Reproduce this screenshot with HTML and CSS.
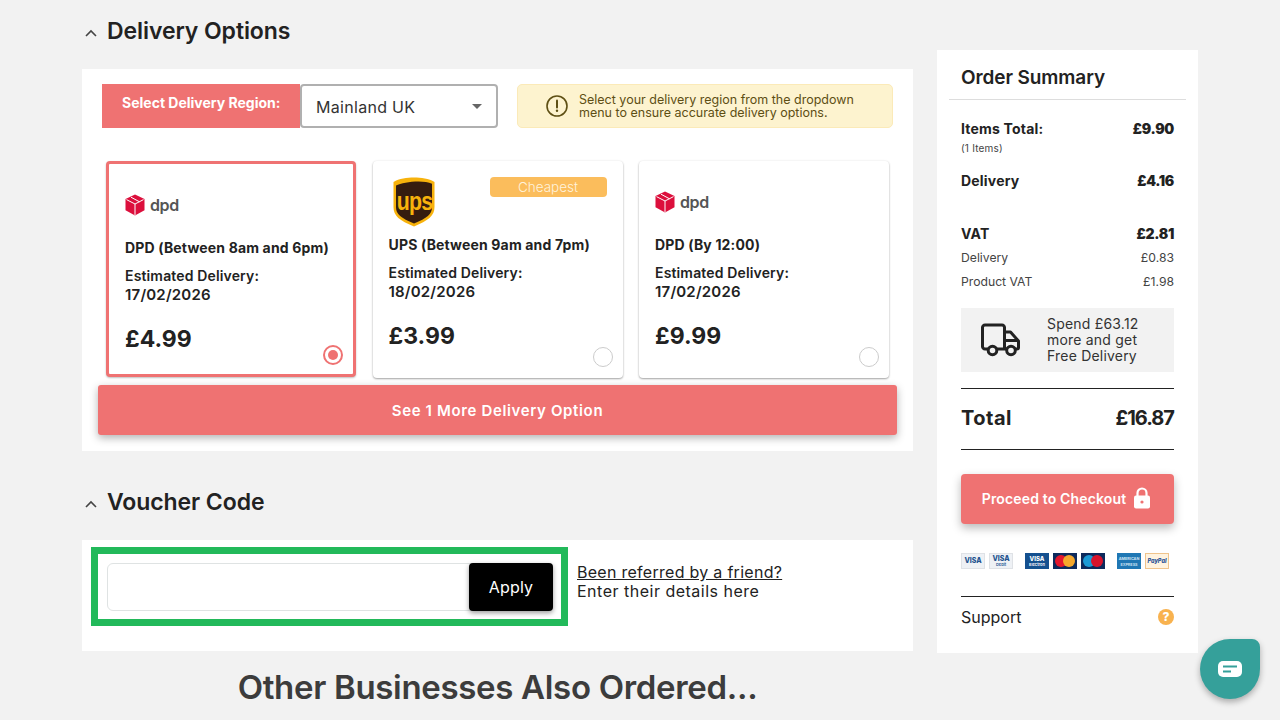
FILE: index.html
```html
<!DOCTYPE html>
<html lang="en">
<head>
<meta charset="utf-8">
<title>Checkout</title>
<link rel="stylesheet" href="styles.css">
</head>
<body>
<div class="page">
  <main class="main">
    <div class="sec-head first">
      <svg class="chev" width="12" height="8" viewBox="0 0 12 8"><path d="M1 7l5-5 5 5" fill="none" stroke="#444" stroke-width="1.6"/></svg>
      <h2>Delivery Options</h2>
    </div>
    <section class="panel delivery">
      <div class="region-row">
        <div class="region-label">Select Delivery Region:</div>
        <div class="region-select"><span>Mainland UK</span><i class="caret"></i></div>
        <div class="notice">
          <svg width="24" height="24" viewBox="0 0 24 24"><circle cx="12" cy="12" r="10" fill="none" stroke="#5e4f14" stroke-width="1.6"/><path d="M12 6.500v7" stroke="#5e4f14" stroke-width="2" stroke-linecap="round"/><circle cx="12" cy="16.800" r="1.200" fill="#5e4f14"/></svg>
          <p>Select your delivery region from the dropdown menu to ensure accurate delivery options.</p>
        </div>
      </div>
      <div class="cards">
        <article class="card selected">
          <div class="logo dpd-logo">
            <svg width="20" height="22" viewBox="0 0 20 22"><path d="M10 .5l9.500 4.600v11.200L10 21.500.5 16.300V5.100z" fill="#dc0f3c"/><path d="M1.500 5.600L10 10l8.500-4.400M10 10v11M6 3.200l8.500 4.600" fill="none" stroke="#fff" stroke-width="1"/></svg>
            <span>dpd</span>
          </div>
          <h3>DPD (Between 8am and 6pm)</h3>
          <p class="est">Estimated Delivery:</p>
          <p class="date">17/02/2026</p>
          <p class="price">£4.99</p>
          <span class="radio on"></span>
        </article>
        <article class="card ups">
          <span class="badge">Cheapest</span>
          <div class="logo ups-logo">
            <svg width="42" height="50" viewBox="0 0 42 50"><path d="M21 .5C14 .5 6 1.500.5 5v25c0 9 6 13.500 20.500 19.500C35 43.500 41.500 39 41.500 30V5C36 1.500 28 .5 21 .5z" fill="#f7b20c"/><path d="M3 8.500C10 5 30 2.500 39 6.800V30c0 7.500-5 11-18 16.500C8 41 3 37.500 3 30z" fill="#351c0f"/></svg>
            <span class="ups-word">ups</span>
          </div>
          <h3>UPS (Between 9am and 7pm)</h3>
          <p class="est">Estimated Delivery:</p>
          <p class="date">18/02/2026</p>
          <p class="price">£3.99</p>
          <span class="radio"></span>
        </article>
        <article class="card plain">
          <div class="logo dpd-logo">
            <svg width="20" height="22" viewBox="0 0 20 22"><path d="M10 .5l9.500 4.600v11.200L10 21.500.5 16.300V5.100z" fill="#dc0f3c"/><path d="M1.500 5.600L10 10l8.500-4.400M10 10v11M6 3.200l8.500 4.600" fill="none" stroke="#fff" stroke-width="1"/></svg>
            <span>dpd</span>
          </div>
          <h3>DPD (By 12:00)</h3>
          <p class="est">Estimated Delivery:</p>
          <p class="date">17/02/2026</p>
          <p class="price">£9.99</p>
          <span class="radio"></span>
        </article>
      </div>
      <button class="more">See 1 More Delivery Option</button>
    </section>

    <div class="sec-head second">
      <svg class="chev" width="12" height="8" viewBox="0 0 12 8"><path d="M1 7l5-5 5 5" fill="none" stroke="#444" stroke-width="1.6"/></svg>
      <h2>Voucher Code</h2>
    </div>
    <section class="panel voucher">
      <div class="voucher-box">
        <div class="voucher-field"><button class="apply">Apply</button></div>
      </div>
      <div class="referral">
        <a href="#">Been referred by a friend?</a>
        <span>Enter their details here</span>
      </div>
    </section>
    <h2 class="other">Other Businesses Also Ordered...</h2>
  </main>

  <aside class="summary">
    <h2 class="sum-title">Order Summary</h2>
    <div class="sum-body">
      <div class="row strong"><span>Items Total:</span><b>£9.90</b></div>
      <div class="items">(1 Items)</div>
      <div class="row strong delivery-row"><span>Delivery</span><b>£4.16</b></div>
      <div class="row strong vat-row"><span>VAT</span><b>£2.81</b></div>
      <div class="row minor first-minor"><span>Delivery</span><span>£0.83</span></div>
      <div class="row minor second-minor"><span>Product VAT</span><span>£1.98</span></div>
      <div class="free">
        <svg width="40" height="34" viewBox="0 0 40 34"><path d="M7 26H4a2.500 2.500 0 0 1-2.500-2.500V4.500A2.500 2.500 0 0 1 4 2h17a2.500 2.500 0 0 1 2.500 2.500V26H16M23.500 9h6l8 9v6.500a1.500 1.500 0 0 1-1.500 1.500h-2M26 26h-2.500M24 17.500h13" fill="none" stroke="#222" stroke-width="3" stroke-linejoin="round"/><circle cx="11.500" cy="27.500" r="4.300" fill="none" stroke="#222" stroke-width="3"/><circle cx="30" cy="27.500" r="4.300" fill="none" stroke="#222" stroke-width="3"/></svg>
        <p>Spend £63.12 more and get Free Delivery</p>
      </div>
      <div class="total"><span class="total-label">Total</span><span class="total-value">£16.87</span></div>
      <button class="checkout">Proceed to Checkout
        <svg width="18" height="22" viewBox="0 0 18 22"><path d="M4.500 9V6a4.500 4.500 0 0 1 9 0v3" fill="none" stroke="#fff" stroke-width="2.200"/><rect x="1" y="8.500" width="16" height="13" rx="2" fill="#fff"/><circle cx="9" cy="15" r="1.600" fill="#ef7272"/></svg>
      </button>
      <div class="pay">
        <span class="pc light">VISA</span>
        <span class="pc light debit">VISA<small>Debit</small></span>
        <span class="pc navy gap">VISA<small>Electron</small></span>
        <span class="pc mc"><i class="c1"></i><i class="c2"></i></span>
        <span class="pc maestro"><i class="c1"></i><i class="c2"></i></span>
        <span class="pc amex gap">AMERICAN<small>EXPRESS</small></span>
        <span class="pc paypal">PayPal</span>
      </div>
      <div class="support"><span>Support</span><span class="q">?</span></div>
    </div>
  </aside>
</div>
<div class="chat">
  <svg width="24" height="16" viewBox="0 0 24 16"><rect width="24" height="16" rx="5" fill="#fff"/><path d="M5 5.500h14M5 10.500h8" stroke="#35a09a" stroke-width="2"/></svg>
</div>
</body>
</html>
```
FILE: styles.css
```css
* { box-sizing: border-box; }
html, body { margin: 0; height: 720px; overflow: hidden; }
body { background: #f2f2f2; color: #222; font-family: "Inter", "Open Sans", sans-serif; }
h2, h3, p { margin: 0; }
button { border: 0; font-family: inherit; cursor: pointer; }

.page { display: flex; gap: 24px; padding: 0 82px; align-items: flex-start; }
.main { width: 831px; flex: none; }

.sec-head { display: flex; align-items: center; gap: 10px; padding-left: 3px; height: 30px; }
.sec-head.first { margin-top: 16px; margin-bottom: 23px; }
.sec-head.second { margin-top: 36px; margin-bottom: 23px; }
.sec-head h2 { font-size: 23px; font-weight: 600; letter-spacing: -0.08px; color: #222; }
.chev { margin-top: 3px; }

.panel { background: #fff; }
.delivery { height: 382px; padding: 15px 16px 0; }

.region-row { display: flex; height: 44px; margin-left: 4px; }
.region-label { width: 198px; background: #ef7272; color: #fff; font-size: 14px; font-weight: 700; padding: 10px 0 0 20px; }
.region-select { width: 198px; border: 2px solid #b0b0b0; border-radius: 4px; background: #fff; display: flex; align-items: center; justify-content: space-between; padding: 1px 14px 0; font-size: 16px; letter-spacing: .3px; color: #333; }
.caret { width: 0; height: 0; border: 5px solid transparent; border-top: 5px solid #666; border-bottom: 0; }
.notice { width: 376px; margin-left: 19px; background: #fdf3cf; border: 1px solid #fbeab8; border-radius: 5px; display: flex; align-items: center; gap: 10px; padding: 0 20px 0 27px; color: #5e4f14; font-size: 12.500px; line-height: 13px; }
.notice svg { flex: none; }

.cards { display: flex; gap: 16.500px; margin: 33px 0 0 8px; }
.card { position: relative; width: 250px; height: 217px; background: #fff; border-radius: 4px; box-shadow: 0 1px 2px rgba(0,0,0,.35), 0 0 3px rgba(0,0,0,.06); padding: 0 16px; }
.card.selected { border: 3px solid #ef7272; height: 216px; box-shadow: 0 1px 2px rgba(0,0,0,.25); }
.logo { display: flex; align-items: center; }
.dpd-logo { gap: 5px; color: #555; font-size: 16px; font-weight: 600; letter-spacing: -.4px; }
.selected .dpd-logo { height: 22px; margin-top: 30px; }
.plain .dpd-logo { height: 22px; margin-top: 30px; }
.ups-logo { position: relative; height: 50px; margin: 16px 0 0 4px; }
.ups-word { position: absolute; left: 0; top: 9px; width: 42px; text-align: center; color: #f7b20c; font-family: "Liberation Sans", sans-serif; font-weight: 700; font-size: 26px; letter-spacing: -1px; transform: scaleX(.82); }
.card h3 { font-size: 14px; font-weight: 700; color: #222; line-height: 17px; white-space: nowrap; letter-spacing: .16px; }
.selected h3 { margin-top: 23px; }
.plain h3 { margin-top: 23px; }
.ups h3 { margin-top: 9px; }
.est { font-size: 14px; font-weight: 600; line-height: 17px; margin-top: 11px; letter-spacing: .15px; }
.date { font-size: 15px; font-weight: 600; line-height: 19px; margin-top: 1px; letter-spacing: .2px; }
.price { font-size: 23px; font-weight: 700; line-height: 29px; margin-top: 21px; color: #222; }
.radio { position: absolute; right: 10px; bottom: 11px; width: 20px; height: 20px; border-radius: 50%; border: 1.500px solid #ccc; background: #fff; }
.radio.on { right: 10px; bottom: 9px; border: 2px solid #ef7272; }
.radio.on::after { content: ""; position: absolute; left: 3px; top: 3px; width: 10px; height: 10px; border-radius: 50%; background: #ef7272; }
.badge { position: absolute; right: 16px; top: 16px; width: 117px; height: 20px; background: #fbbd5c; border-radius: 4px; color: #fff3dc; font-size: 13.500px; font-weight: 300; text-align: center; line-height: 20px; }

.more { display: block; width: 799px; height: 50px; margin: 7px 0 0 0; background: #ef7272; color: #fff; font-size: 15px; font-weight: 600; border-radius: 3px; box-shadow: 0 3px 8px rgba(0,0,0,.3); letter-spacing: .64px; }

.voucher { height: 111px; display: flex; padding: 7px 0 0 9px; }
.voucher-box { width: 477px; height: 79px; border: 7px solid #22b95a; padding: 9px 8px; }
.voucher-field { width: 446px; height: 48px; border: 1px solid #dfe3e3; border-radius: 6px; display: flex; justify-content: flex-end; margin-left: 1px; }
.apply { width: 84px; height: 48px; margin: -1px; background: #000; color: #fff; font-size: 16px; border-radius: 4px; box-shadow: 0 2px 5px rgba(0,0,0,.4); letter-spacing: .2px; flex: none; }
.referral { display: flex; flex-direction: column; margin: 16px 0 0 9px; font-size: 16px; line-height: 19px; color: #222; }
.referral a { color: #222; letter-spacing: .28px; }
.referral span { letter-spacing: .5px; }

.other { font-size: 33px; font-weight: 600; color: #3c3c3c; text-align: center; margin-top: 16px; line-height: 40px; letter-spacing: -.32px; }

.summary { width: 261px; height: 603px; margin-top: 50px; background: #fff; flex: none; }
.sum-title { font-size: 19px; font-weight: 600; color: #222; padding: 16px 0 10px 12px; margin: 0 12px; border-bottom: 1px solid #ddd; height: 50px; line-height: 23px; letter-spacing: -.1px; }
.sum-body { padding: 0 24px; }
.row { display: flex; justify-content: space-between; }
.strong { font-size: 14px; font-weight: 700; line-height: 17px; letter-spacing: .2px; }
.strong b { letter-spacing: -.3px; }
.sum-body > .row:first-child { margin-top: 20px; }
.items { font-size: 10px; line-height: 12px; margin-top: 5px; color: #444; letter-spacing: .2px; }
.delivery-row { margin-top: 18px; }
.vat-row { margin-top: 36px; }
.minor { font-size: 12.200px; line-height: 16px; color: #444; }
.first-minor { margin-top: 8px; }
.second-minor { margin-top: 8px; }
.free { height: 64px; margin-top: 18px; background: #f2f2f2; display: flex; align-items: center; padding-left: 20px; gap: 26px; font-size: 14px; line-height: 16px; color: #333; }
.free svg { flex: none; }
.free p { width: 105px; letter-spacing: .2px; }
.total { display: flex; justify-content: space-between; align-items: center; height: 62px; margin-top: 16px; padding-bottom: 2px; border-top: 1px solid #222; border-bottom: 1px solid #222; font-size: 20px; font-weight: 700; }
.total-label { letter-spacing: .5px; }
.total-value { letter-spacing: -1px; }
.checkout { display: flex; align-items: center; justify-content: center; gap: 7px; width: 213px; height: 50px; margin-top: 24px; padding: 0 2px 2px 0; background: #ef7272; color: #fff; font-size: 14px; font-weight: 600; border-radius: 4px; box-shadow: 0 4px 10px rgba(0,0,0,.28); white-space: nowrap; letter-spacing: .15px; }
.pay { display: flex; margin-top: 29px; height: 16px; gap: 4px; }
.pc { position: relative; width: 24px; height: 16px; display: flex; flex-direction: column; align-items: center; justify-content: center; font-size: 7px; line-height: 6px; font-weight: 800; overflow: hidden; font-style: normal; }
.pc small { font-size: 4px; line-height: 5px; font-weight: 600; }
.pc.gap { margin-left: 8px; }
.light { background: #eef1f5; border: 1px solid #dfe2e6; color: #23548f; }
.debit { font-size: 7px; }
.navy { background: #14508f; color: #fff; font-size: 6px; }
.amex { background: #1f77b4; color: #cfe4f3; font-size: 3.800px; font-weight: 700; }
.amex small { font-size: 3.800px; }
.paypal { background: #fff3df; border: 1px solid #f0c48c; color: #1c4f96; font-size: 5.500px; font-style: italic; }
.mc { background: #0d2a5c; }
.maestro { background: #0d2a5c; }
.pc i { position: absolute; top: 2px; width: 12px; height: 12px; border-radius: 50%; }
.mc .c1 { left: 2px; background: #e3172d; }
.mc .c2 { right: 2px; background: #f5a82c; }
.maestro .c1 { left: 2px; background: #1b9ad6; }
.maestro .c2 { right: 2px; background: #d8132b; }
.support { display: flex; justify-content: space-between; align-items: center; height: 40px; margin-top: 27px; border-top: 1px solid #222; font-size: 16px; color: #222; }
.q { width: 16px; height: 16px; border-radius: 50%; background: #f8b24f; color: #fff; font-size: 12px; font-weight: 800; display: flex; align-items: center; justify-content: center; }

.chat { position: fixed; left: 1200px; top: 639px; width: 60px; height: 60px; background: #35a09a; border-radius: 50% 8px 50% 50%; box-shadow: 0 3px 6px rgba(0,0,0,.3); display: flex; align-items: center; justify-content: center; }
```
